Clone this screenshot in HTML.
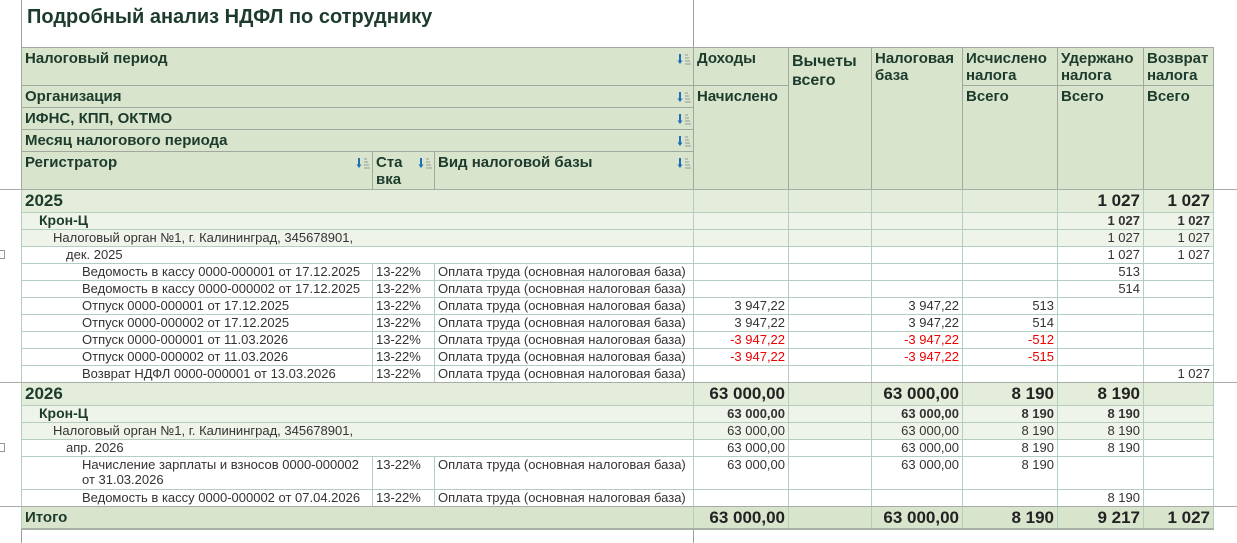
<!DOCTYPE html>
<html><head><meta charset="utf-8"><style>
*{margin:0;padding:0;box-sizing:border-box}
body{width:1237px;height:543px;background:#fff;font-family:"Liberation Sans",Arial,sans-serif;color:#333;position:relative;overflow:hidden}
.a{position:absolute}
.title{left:27px;top:6px;font-size:20px;font-weight:bold;color:#1c3b2c}
.h{position:absolute;background:#d8e4cc;border:1px solid #a0a8a0;font-weight:bold;font-size:15px;color:#1c3b2c;padding:2px 3px;line-height:17px;white-space:nowrap;overflow:hidden}
.s{position:absolute;right:2px;top:5px;width:14px;height:12px}
table{position:absolute;left:21px;top:189px;border-collapse:collapse;table-layout:fixed;width:1192px;font-size:13px}
td{border:1px solid #b3cdc0;padding:0 3px;height:17px;line-height:15px;vertical-align:top;white-space:nowrap;overflow:hidden}
td.r{text-align:right}
tr.y td{background:#e3edda;font-weight:bold;font-size:17px;height:23px;line-height:22px;color:#222}
tr.y td.l{color:#1c3b2c}
tr.o td{background:#eef4ea;font-weight:bold;font-size:13px}
tr.o td.l{color:#1c3b2c;padding-left:17px;font-size:14px}
tr.n td{background:#eef4ea}
tr.n td.l{padding-left:31px}
tr.m td.l{padding-left:44px}
td.d{padding-left:60px}
.red{color:#e00}
tr.t td{background:#d8e4cc;font-weight:bold;font-size:17px;height:22px;line-height:21px;border-bottom:2px solid #a8b0a8;color:#222}
tr.t td.l{color:#1c3b2c;font-size:15px}
.hl{position:absolute;height:1px;background:#a8aca8;left:0;width:1237px}
</style></head><body>
<svg width="0" height="0" style="position:absolute"><defs><symbol id="si" viewBox="0 0 14 12"><path d="M3 1v8" stroke="#1e6fb8" stroke-width="2"/><path d="M0.5 7.5L3 11L5.5 7.5z" fill="#1e6fb8"/><path d="M8 2h3M8 5h4M8 8h5M8 11h6" stroke="#999" stroke-width="1"/></symbol></defs></svg>
<div class="a" style="left:21px;top:0;width:1px;height:543px;background:#a0a0a0"></div>
<div class="a" style="left:693px;top:0;width:1px;height:543px;background:#a0a0a0"></div>
<div class="a title">Подробный анализ НДФЛ по сотруднику</div>

<div class="h" style="left:21px;top:47px;width:673px;height:39px">Налоговый период<svg class="s"><use href="#si"/></svg></div>
<div class="h" style="left:21px;top:85px;width:673px;height:23px">Организация<svg class="s"><use href="#si"/></svg></div>
<div class="h" style="left:21px;top:107px;width:673px;height:23px">ИФНС, КПП, ОКТМО<svg class="s"><use href="#si"/></svg></div>
<div class="h" style="left:21px;top:129px;width:673px;height:23px">Месяц налогового периода<svg class="s"><use href="#si"/></svg></div>
<div class="h" style="left:21px;top:151px;width:352px;height:39px">Регистратор<svg class="s"><use href="#si"/></svg></div>
<div class="h" style="left:372px;top:151px;width:63px;height:39px">Ста<br>вка<svg class="s"><use href="#si"/></svg></div>
<div class="h" style="left:434px;top:151px;width:260px;height:39px">Вид налоговой базы<svg class="s"><use href="#si"/></svg></div>

<div class="h" style="left:693px;top:47px;width:96px;height:39px">Доходы</div>
<div class="h" style="left:693px;top:85px;width:96px;height:105px">Начислено</div>
<div class="h" style="left:788px;top:47px;width:84px;height:143px;font-size:16px;padding-top:4px;line-height:19px">Вычеты<br>всего</div>
<div class="h" style="left:871px;top:47px;width:92px;height:143px">Налоговая<br>база</div>
<div class="h" style="left:962px;top:47px;width:96px;height:39px">Исчислено<br>налога</div>
<div class="h" style="left:962px;top:85px;width:96px;height:105px">Всего</div>
<div class="h" style="left:1057px;top:47px;width:87px;height:39px">Удержано<br>налога</div>
<div class="h" style="left:1057px;top:85px;width:87px;height:105px">Всего</div>
<div class="h" style="left:1143px;top:47px;width:71px;height:39px">Возврат<br>налога</div>
<div class="h" style="left:1143px;top:85px;width:71px;height:105px">Всего</div>

<table>
<colgroup><col style="width:351px"><col style="width:62px"><col style="width:259px"><col style="width:95px"><col style="width:83px"><col style="width:91px"><col style="width:95px"><col style="width:86px"><col style="width:70px"></colgroup>
<tr class="y"><td class="l" colspan="3">2025</td><td></td><td></td><td></td><td></td><td class="r">1 027</td><td class="r">1 027</td></tr>
<tr class="o"><td class="l" colspan="3">Крон-Ц</td><td></td><td></td><td></td><td></td><td class="r">1 027</td><td class="r">1 027</td></tr>
<tr class="n"><td class="l" colspan="3">Налоговый орган №1, г. Калининград, 345678901,</td><td></td><td></td><td></td><td></td><td class="r">1 027</td><td class="r">1 027</td></tr>
<tr class="m"><td class="l" colspan="3">дек. 2025</td><td></td><td></td><td></td><td></td><td class="r">1 027</td><td class="r">1 027</td></tr>
<tr><td class="d">Ведомость в кассу 0000-000001 от 17.12.2025</td><td>13-22%</td><td>Оплата труда (основная налоговая база)</td><td></td><td></td><td></td><td></td><td class="r">513</td><td></td></tr>
<tr><td class="d">Ведомость в кассу 0000-000002 от 17.12.2025</td><td>13-22%</td><td>Оплата труда (основная налоговая база)</td><td></td><td></td><td></td><td></td><td class="r">514</td><td></td></tr>
<tr><td class="d">Отпуск 0000-000001 от 17.12.2025</td><td>13-22%</td><td>Оплата труда (основная налоговая база)</td><td class="r">3 947,22</td><td></td><td class="r">3 947,22</td><td class="r">513</td><td></td><td></td></tr>
<tr><td class="d">Отпуск 0000-000002 от 17.12.2025</td><td>13-22%</td><td>Оплата труда (основная налоговая база)</td><td class="r">3 947,22</td><td></td><td class="r">3 947,22</td><td class="r">514</td><td></td><td></td></tr>
<tr><td class="d">Отпуск 0000-000001 от 11.03.2026</td><td>13-22%</td><td>Оплата труда (основная налоговая база)</td><td class="r red">-3 947,22</td><td></td><td class="r red">-3 947,22</td><td class="r red">-512</td><td></td><td></td></tr>
<tr><td class="d">Отпуск 0000-000002 от 11.03.2026</td><td>13-22%</td><td>Оплата труда (основная налоговая база)</td><td class="r red">-3 947,22</td><td></td><td class="r red">-3 947,22</td><td class="r red">-515</td><td></td><td></td></tr>
<tr><td class="d">Возврат НДФЛ 0000-000001 от 13.03.2026</td><td>13-22%</td><td>Оплата труда (основная налоговая база)</td><td></td><td></td><td></td><td></td><td></td><td class="r">1 027</td></tr>
<tr class="y"><td class="l" colspan="3">2026</td><td class="r">63 000,00</td><td></td><td class="r">63 000,00</td><td class="r">8 190</td><td class="r">8 190</td><td></td></tr>
<tr class="o"><td class="l" colspan="3">Крон-Ц</td><td class="r">63 000,00</td><td></td><td class="r">63 000,00</td><td class="r">8 190</td><td class="r">8 190</td><td></td></tr>
<tr class="n"><td class="l" colspan="3">Налоговый орган №1, г. Калининград, 345678901,</td><td class="r">63 000,00</td><td></td><td class="r">63 000,00</td><td class="r">8 190</td><td class="r">8 190</td><td></td></tr>
<tr class="m"><td class="l" colspan="3">апр. 2026</td><td class="r">63 000,00</td><td></td><td class="r">63 000,00</td><td class="r">8 190</td><td class="r">8 190</td><td></td></tr>
<tr><td class="d" style="height:33px;white-space:normal">Начисление зарплаты и взносов 0000-000002 от 31.03.2026</td><td>13-22%</td><td>Оплата труда (основная налоговая база)</td><td class="r">63 000,00</td><td></td><td class="r">63 000,00</td><td class="r">8 190</td><td></td><td></td></tr>
<tr><td class="d">Ведомость в кассу 0000-000002 от 07.04.2026</td><td>13-22%</td><td>Оплата труда (основная налоговая база)</td><td></td><td></td><td></td><td></td><td class="r">8 190</td><td></td></tr>
<tr class="t"><td class="l" colspan="3">Итого</td><td class="r">63 000,00</td><td></td><td class="r">63 000,00</td><td class="r">8 190</td><td class="r">9 217</td><td class="r">1 027</td></tr>
</table>
<div class="hl" style="top:189px"></div>
<div class="hl" style="top:382px"></div>
<div class="hl" style="top:506px"></div>
<div class="a" style="left:0;top:250px;width:5px;height:9px;border:1px solid #999;border-left:none"></div>
<div class="a" style="left:0;top:443px;width:5px;height:9px;border:1px solid #999;border-left:none"></div>
</body></html>
